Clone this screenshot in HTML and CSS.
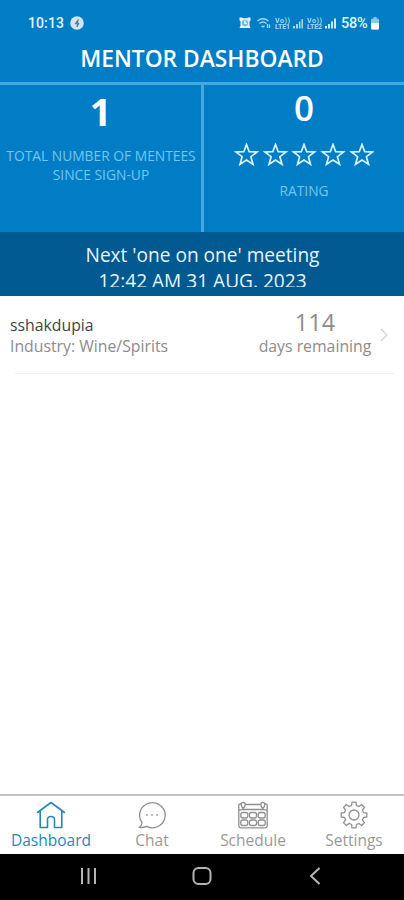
FILE: index.html
```html
<!DOCTYPE html>
<html lang="en">
<head>
<meta charset="utf-8">
<title>Mentor Dashboard</title>
<link rel="stylesheet" href="styles.css">
</head>
<body>
<div class="app">
  <header class="header">
    <div class="status">
      <span class="clock">10:13</span>
      <svg class="notif" viewBox="0 0 14 14"><circle cx="7" cy="7" r="6.800" fill="#cfe6f6"/><path d="M8.300 3.500 5.200 7.800h2.400L6.900 10.800 9 7.200H7.200Z" fill="#54788f" stroke="#54788f"/></svg>
      <span class="spacer"></span>
      <svg class="sys" viewBox="0 0 98 14">
        <g fill="#e4f4fd">
          <path d="M.5 1.500h2.500l1 .8h4l1-.8h2.500v3l-1 1v4l1 2.500h-11l1-2.500v-4l-1-1Z"/>
          <circle cx="6" cy="7" r="3.200" fill="#78b9e0"/>
          <path d="M6 4.500V7.300h2" fill="none" stroke="#fff" stroke-width="1.200"/>
        </g>
        <g fill="none" stroke="#a9d7f1" stroke-width="1.300">
          <path d="M18.500 5Q24 .5 29.500 5M20.500 7.500Q24 4.500 27.500 7.500M22.500 9.700l1.500 1.300 1.500-1.300M28.500 8v4M30.500 8.500V12"/>
        </g>
        <g fill="#a9d7f1">
          <path d="M54 10h2v2.500h-2ZM57 8h2v4.500h-2ZM60 5.500h1.500v7H60ZM62.500 3H64v9.500h-1.500Z"/>
          <path d="M86 10h2v2.500h-2ZM89 8h2v4.500h-2ZM92 5.500h2v7h-2ZM95 2.500h2v10h-2Z" fill="#cdeafa"/>
        </g>
        <g class="lte"><text x="36" y="6.500" textLength="15">Vo))</text><text x="36" y="13" textLength="15">LTE1</text><text x="68" y="6.500" textLength="15">Vo))</text><text x="68" y="13" textLength="15">LTE2</text></g>
      </svg>
      <span class="percent">58%</span>
      <svg class="battery" viewBox="0 0 8 13"><path d="M2.500 0h3v2h-3Z" fill="#8ccaed"/><rect y="1.500" width="8" height="11" rx="1.500" fill="#8ccaed"/><path d="M0 6h8v5a1.500 1.500 0 0 1-1.500 1.500h-5A1.500 1.500 0 0 1 0 11Z" fill="#fff"/></svg>
    </div>
    <h1 class="title">MENTOR DASHBOARD</h1>
  </header>

  <section class="stats">
    <div class="stat stat-mentees">
      <div class="value bold">1</div>
      <div class="caption">TOTAL NUMBER OF MENTEES<br>SINCE SIGN-UP</div>
    </div>
    <div class="stat stat-rating">
      <div class="value">0</div>
      <svg class="stars" viewBox="0 0 140 24">
        <defs><path id="star" d="M0-10.500 2.700-3.300 10.500-3 4.400 1.700 6.500 9.300 0 5-6.500 9.300-4.400 1.700-10.500-3-2.700-3.300Z"/></defs>
        <g fill="none" stroke="#d9f3fd" stroke-width="1.700">
          <use href="#star" x="12.500" y="12"/><use href="#star" x="41.500" y="12"/><use href="#star" x="70" y="12"/><use href="#star" x="99" y="12"/><use href="#star" x="128" y="12"/>
        </g>
      </svg>
      <div class="caption rating">RATING</div>
    </div>
  </section>

  <section class="meeting">
    <div class="meeting-title">Next 'one on one' meeting</div>
    <div class="meeting-date">12:42 AM 31 AUG. 2023</div>
  </section>

  <main class="list">
    <div class="row">
      <div class="person">
        <div class="name">sshakdupia</div>
        <div class="industry">Industry: Wine/Spirits</div>
      </div>
      <div class="remaining">
        <div class="days">114</div>
        <div class="days-label">days remaining</div>
      </div>
      <svg class="chevron" viewBox="0 0 8 14"><path d="m1 1 6 6-6 6" fill="none" stroke="#d2d2d2" stroke-width="1.200"/></svg>
    </div>
  </main>

  <nav class="tabs">
    <div class="tab active">
      <svg viewBox="0 0 30 28"><path stroke-linejoin="round" stroke-linecap="round" d="M1.500 11.500 15 1.500l13.500 10M4.200 10v16.500h7.300V18.500q0-3 3.500-3t3.500 3v8h7.300V10"/></svg>
      <span>Dashboard</span>
    </div>
    <div class="tab tab-chat">
      <svg viewBox="0 0 30 28"><path d="M5 21.500A12.800 12.500 0 1 1 9.500 25.300Q6 27 2.500 26.300 5 24.500 5 21.500Z"/><path d="M9.200 14h1.600M14.200 14h1.600M19.200 14h1.600" stroke-width="1.600"/></svg>
      <span>Chat</span>
    </div>
    <div class="tab tab-schedule">
      <svg viewBox="0 0 30 28"><path d="M3.500 3H2Q.8 3 .8 4.500V25q0 1.800 1.800 1.800h24.800q1.800 0 1.800-1.800V4.500Q29.200 3 28 3h-1.500M7 3.500h16M.8 9.500 4 8.500h22l3.200 1"/><path d="M3.200 3.500q0-2.200 2-2.200t2 2.200q0 2-2 4-2-2-2-4ZM22.800 3.500q0-2.200 2-2.200t2 2.200q0 2-2 4-2-2-2-4Z"/><g><rect x="2.800" y="11.500" width="7" height="5.500" rx="2"/><rect x="11.500" y="11.500" width="7" height="5.500" rx="2"/><rect x="20.200" y="11.500" width="7" height="5.500" rx="2"/><rect x="2.800" y="19" width="7" height="5.500" rx="2"/><rect x="11.500" y="19" width="7" height="5.500" rx="2"/><rect x="20.200" y="19" width="7" height="5.500" rx="2"/></g></svg>
      <span>Schedule</span>
    </div>
    <div class="tab tab-settings">
      <svg viewBox="-15 -14 30 28"><path stroke-linejoin="round" d="M-2.400-9.500-2-12.800H2L2.400-9.500 5-8.400 7.600-10.500 10.500-7.600 8.400-5 9.500-2.400 12.800-2V2L9.500 2.400 8.400 5 10.500 7.600 7.600 10.500 5 8.400 2.400 9.500 2 12.800H-2L-2.400 9.500-5 8.400-7.600 10.500-10.500 7.600-8.400 5-9.500 2.400-12.800 2V-2L-9.500-2.400-8.400-5-10.500-7.600-7.600-10.500-5-8.400Z"/><circle r="5"/></svg>
      <span>Settings</span>
    </div>
  </nav>

  <div class="system-nav">
    <svg viewBox="0 0 20 20"><path d="M3 2v16M9.500 2v16M16 2v16"/></svg>
    <svg viewBox="0 0 20 20"><rect x="1.500" y="2" width="17" height="16" rx="5"/></svg>
    <svg viewBox="0 0 20 20"><path d="M14.500 2 6 10l8.500 8"/></svg>
  </div>
</div>
</body>
</html>
```
FILE: styles.css
```css
* { box-sizing: border-box; }
body { margin: 0; font-family: "Open Sans", "Noto Sans", sans-serif; background: #fff; }
svg { display: block; flex: none; }
.app { width: 404px; height: 900px; display: flex; flex-direction: column; overflow: hidden; }

.header { height: 82px; background: #007dc5; color: #fff; flex: none; }
.status { height: 46px; padding: 0 25px 0 28px; display: flex; align-items: center; font-family: Roboto, sans-serif; font-weight: 500; }
.clock { font-size: 14px; color: #e3f3fc; width: 42px; letter-spacing: .1px; }
.notif { width: 14px; height: 14px; }
.spacer { flex: 1; }
.sys { width: 98px; height: 14px; }
.lte { fill: #a9d7f1; font: 700 7px Roboto, sans-serif; }
.percent { width: 29px; margin-left: 4px; margin-right: 1px; font-size: 14.500px; color: #e3f3fc; letter-spacing: -.3px; }
.battery { width: 8px; height: 13px; }
.title { margin: 0; font-size: 22.800px; line-height: 25px; font-weight: 600; text-align: center; white-space: nowrap; }

.stats { height: 150px; flex: none; display: grid; grid-template-columns: 204px 200px; background: #007dc5; border-top: 3px solid #45a7df; }
.stat { display: flex; flex-direction: column; align-items: center; color: #fff; }
.stat-mentees { border-right: 3px solid #45a7df; }
.value { font-size: 35px; line-height: 46px; font-weight: 600; }
.bold { font-weight: 700; line-height: 48px; margin-top: 2px; font-size: 38px; }
.caption { font-size: 13.800px; line-height: 19px; color: #72c7f0; text-align: center; white-space: nowrap; }
.stat-mentees .caption { margin-top: 11px; padding-left: 1px; }
.stars { width: 140px; height: 24px; margin-top: 12px; }
.caption.rating { margin-top: 14px; }

.meeting { height: 64px; flex: none; padding: 10px 0 0 1px; background: #005991; color: #e8f3fa; text-align: center; white-space: nowrap; }
.meeting-title { font-size: 19.100px; line-height: 26px; }
.meeting-date { height: 19px; overflow: hidden; font-size: 19.100px; line-height: 27px; }

.list { flex: 1; }
.row { height: 78px; margin-left: 10px; padding-right: 16px; display: flex; position: relative; }
.row::after { content: ""; position: absolute; left: 5px; right: 10px; bottom: 0; height: 1px; background: #f0f0f0; }
.person { flex: 1; padding-top: 18px; white-space: nowrap; }
.name { font-size: 15.800px; line-height: 22px; color: #444; }
.industry { font-size: 15.800px; line-height: 21px; color: #8c8c8c; }
.remaining { width: 114px; text-align: center; margin-right: 8px; padding-top: 11px; color: #8c8c8c; white-space: nowrap; }
.days { font-size: 23.500px; line-height: 30px; }
.days-label { font-size: 15.800px; line-height: 19px; }
.chevron { width: 8px; height: 14px; margin-top: 32px; }

.tabs { height: 60px; flex: none; display: grid; grid-template-columns: repeat(4, 1fr); border-top: 2px solid #c3c3c3; color: #999; }
.tab { display: flex; flex-direction: column; align-items: center; padding-top: 5px; font-size: 15.500px; line-height: 22px; }
.tab span { padding-left: 1px; }
.tab svg { width: 30px; height: 28px; fill: none; stroke: #909090; stroke-width: 1.300; }
.tab.active { color: #2488bc; }
.tab.active svg { stroke: #2488bc; stroke-width: 1.600; }

.system-nav { height: 46px; flex: none; display: flex; justify-content: space-between; padding: 12px 79px 0; background: #000; }
.system-nav svg { width: 20px; height: 20px; fill: none; stroke: #b5b5b5; stroke-width: 2; }
```
